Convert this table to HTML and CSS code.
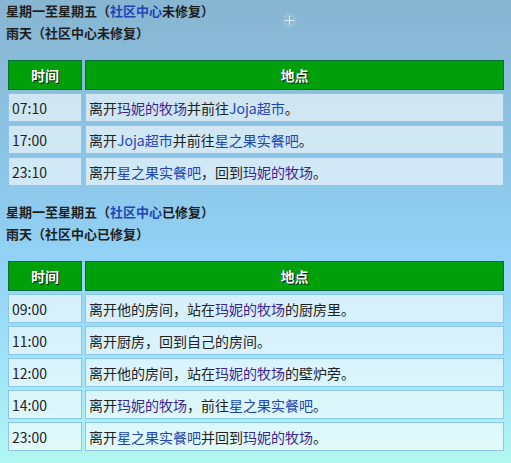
FILE: index.html
```html
<!DOCTYPE html>
<html lang="zh">
<head>
<meta charset="utf-8">
<title>日程</title>
<link rel="stylesheet" href="styles.css">
</head>
<body>
<div class="page">
  <span class="sparkle"></span>
  <div class="heading">
    <div>星期一至星期五（<a class="lk">社区中心</a>未修复）</div>
    <div>雨天（社区中心未修复）</div>
  </div>
  <table class="sched first">
    <thead><tr><th class="c1">时间</th><th>地点</th></tr></thead>
    <tbody>
      <tr><td>07:10</td><td>离开<a class="vis">玛妮的牧场</a>并前往<a class="lk">Joja超市</a>。</td></tr>
      <tr><td>17:00</td><td>离开<a class="lk">Joja超市</a>并前往<a class="lk">星之果实餐吧</a>。</td></tr>
      <tr><td>23:10</td><td>离开<a class="lk">星之果实餐吧</a>，回到<a class="vis">玛妮的牧场</a>。</td></tr>
    </tbody>
  </table>
  <div class="heading second">
    <div>星期一至星期五（<a class="lk">社区中心</a>已修复）</div>
    <div>雨天（社区中心已修复）</div>
  </div>
  <table class="sched">
    <thead><tr><th class="c1">时间</th><th>地点</th></tr></thead>
    <tbody>
      <tr><td>09:00</td><td>离开他的房间，站在<a class="vis">玛妮的牧场</a>的厨房里。</td></tr>
      <tr><td>11:00</td><td>离开厨房，回到自己的房间。</td></tr>
      <tr><td>12:00</td><td>离开他的房间，站在<a class="vis">玛妮的牧场</a>的壁炉旁。</td></tr>
      <tr><td>14:00</td><td>离开<a class="vis">玛妮的牧场</a>，前往<a class="lk">星之果实餐吧</a>。</td></tr>
      <tr><td>23:00</td><td>离开<a class="lk">星之果实餐吧</a>并回到<a class="vis">玛妮的牧场</a>。</td></tr>
    </tbody>
  </table>
</div>
</body>
</html>
```
FILE: styles.css
```css
html, body {
  margin: 0;
  padding: 0;
}
body {
  width: 511px;
  height: 463px;
  overflow: hidden;
  background: linear-gradient(to bottom, #88b5d1 0px, #8cc6e8 170px, #93d2f6 260px, #a0e2f8 360px, #b2f6f0 463px);
  font-family: "Noto Sans CJK SC", "Noto Sans", sans-serif;
  color: #222;
}
.page {
  position: relative;
}
.sparkle {
  position: absolute;
  left: 285px;
  top: 16px;
  width: 9px;
  height: 9px;
  background:
    linear-gradient(to right, transparent 4px, rgba(255,255,255,0.85) 4px, rgba(255,255,255,0.85) 5px, transparent 5px),
    linear-gradient(to bottom, transparent 4px, rgba(255,255,255,0.85) 4px, rgba(255,255,255,0.85) 5px, transparent 5px);
  border-radius: 50%;
  box-shadow: 0 0 4px 1px rgba(255,255,255,0.3);
}
.heading {
  padding-left: 6px;
  font-size: 13px;
  font-weight: bold;
  line-height: 22px;
  color: #1e1e1e;
}
.heading.second {
  margin-top: 12px;
}
a.lk {
  color: #2146b4;
}
a.vis {
  color: #3a2593;
}
.sched {
  margin: 13px 0 0 5px;
  width: 502px;
  border-collapse: separate;
  border-spacing: 3px;
  table-layout: fixed;
}
.sched th {
  height: 28px;
  padding: 0;
  background: #00a00b;
  border: 1px solid #0b6e3a;
  color: #fff;
  font-size: 14px;
  font-weight: bold;
  text-shadow: 1px 1px 0 #0b2a10, -1px 0 0 rgba(0,0,0,0.25);
  text-align: center;
}
.sched th.c1 {
  width: 72px;
}
.sched td {
  height: 27px;
  padding: 0 0 0 3px;
  background: rgba(255,255,255,0.6);
  border: 1px solid #8dc6ea;
  font-size: 14px;
  line-height: 20px;
  color: #222;
}
```
